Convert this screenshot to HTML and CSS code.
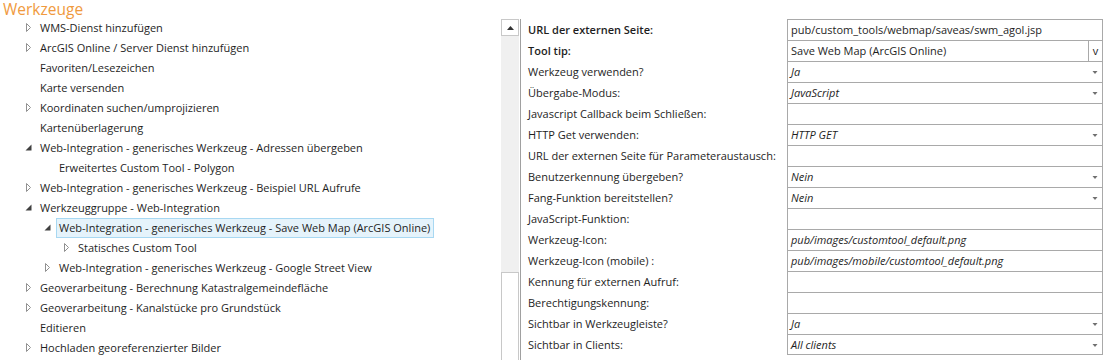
FILE: index.html
```html
<!DOCTYPE html>
<html lang="de">
<head>
    <meta charset="UTF-8">
    <title>Werkzeuge</title>
    <link rel="stylesheet" href="styles.css">
</head>
<body>
<div class="page">
    <!-- linke Seite: Baum der Werkzeuge -->
    <div class="tools-pane">
        <div class="title">Werkzeuge</div>
        <ul class="tree">
            <li class="node lvl0 closed"><span class="tog"></span><span class="lbl">WMS-Dienst hinzufügen</span></li>
            <li class="node lvl0 closed"><span class="tog"></span><span class="lbl">ArcGIS Online / Server Dienst hinzufügen</span></li>
            <li class="node lvl0"><span class="tog"></span><span class="lbl">Favoriten/Lesezeichen</span></li>
            <li class="node lvl0"><span class="tog"></span><span class="lbl">Karte versenden</span></li>
            <li class="node lvl0 closed"><span class="tog"></span><span class="lbl">Koordinaten suchen/umprojizieren</span></li>
            <li class="node lvl0"><span class="tog"></span><span class="lbl">Kartenüberlagerung</span></li>
            <li class="node lvl0 open"><span class="tog"></span><span class="lbl">Web-Integration - generisches Werkzeug - Adressen übergeben</span></li>
            <li class="node lvl1"><span class="tog"></span><span class="lbl">Erweitertes Custom Tool - Polygon</span></li>
            <li class="node lvl0 closed"><span class="tog"></span><span class="lbl">Web-Integration - generisches Werkzeug - Beispiel URL Aufrufe</span></li>
            <li class="node lvl0 open"><span class="tog"></span><span class="lbl">Werkzeuggruppe - Web-Integration</span></li>
            <li class="node lvl1 open selected"><span class="tog"></span><span class="lbl">Web-Integration - generisches Werkzeug - Save Web Map (ArcGIS Online)</span></li>
            <li class="node lvl2 closed"><span class="tog"></span><span class="lbl">Statisches Custom Tool</span></li>
            <li class="node lvl1 closed"><span class="tog"></span><span class="lbl">Web-Integration - generisches Werkzeug - Google Street View</span></li>
            <li class="node lvl0 closed"><span class="tog"></span><span class="lbl">Geoverarbeitung - Berechnung Katastralgemeindefläche</span></li>
            <li class="node lvl0 closed"><span class="tog"></span><span class="lbl">Geoverarbeitung - Kanalstücke pro Grundstück</span></li>
            <li class="node lvl0"><span class="tog"></span><span class="lbl">Editieren</span></li>
            <li class="node lvl0 closed"><span class="tog"></span><span class="lbl">Hochladen georeferenzierter Bilder</span></li>
        </ul>
    </div>

    <!-- rechte Seite: Eigenschaften -->
    <div class="props-pane">
        <div class="vscroll">
            <div class="scroll-up"><svg width="7" height="4" viewBox="0 0 7 4"><path d="M0 4 L3.5 0 L7 4 Z" fill="#333"/></svg></div>
            <div class="scroll-track"></div>
            <div class="scroll-thumb"></div>
        </div>
        <div class="grid">
            <div class="key bold">URL der externen Seite:</div>
            <div class="val">pub/custom_tools/webmap/saveas/swm_agol.jsp</div>

            <div class="key bold">Tool tip:</div>
            <div class="val has-btn"><span class="txt">Save Web Map (ArcGIS Online)</span><span class="btn-v">v</span></div>

            <div class="key">Werkzeug verwenden?</div>
            <div class="val sel"><span class="txt">Ja</span><span class="drop"></span></div>

            <div class="key">Übergabe-Modus:</div>
            <div class="val sel"><span class="txt">JavaScript</span><span class="drop"></span></div>

            <div class="key">Javascript Callback beim Schließen:</div>
            <div class="val"></div>

            <div class="key">HTTP Get verwenden:</div>
            <div class="val sel"><span class="txt">HTTP GET</span><span class="drop"></span></div>

            <div class="key">URL der externen Seite für Parameteraustausch:</div>
            <div class="val"></div>

            <div class="key">Benutzerkennung übergeben?</div>
            <div class="val sel"><span class="txt">Nein</span><span class="drop"></span></div>

            <div class="key">Fang-Funktion bereitstellen?</div>
            <div class="val sel"><span class="txt">Nein</span><span class="drop"></span></div>

            <div class="key">JavaScript-Funktion:</div>
            <div class="val"></div>

            <div class="key">Werkzeug-Icon:</div>
            <div class="val it">pub/images/customtool_default.png</div>

            <div class="key">Werkzeug-Icon (mobile) :</div>
            <div class="val it">pub/images/mobile/customtool_default.png</div>

            <div class="key">Kennung für externen Aufruf:</div>
            <div class="val"></div>

            <div class="key">Berechtigungskennung:</div>
            <div class="val"></div>

            <div class="key">Sichtbar in Werkzeugleiste?</div>
            <div class="val sel"><span class="txt">Ja</span><span class="drop"></span></div>

            <div class="key">Sichtbar in Clients:</div>
            <div class="val sel last"><span class="txt">All clients</span><span class="drop"></span></div>
        </div>
    </div>
</div>
</body>
</html>
```

FILE: styles.css
```css
body {
    margin: 0;
    padding: 0;
    background: #fff;
    font-family: "Open Sans", "Noto Sans", sans-serif;
    font-size: 11px;
    color: #1e1e1e;
    width: 1105px;
    height: 360px;
    overflow: hidden;
}

.page {
    display: flex;
    align-items: flex-start;
}

/* linker Bereich */
.tools-pane {
    width: 501px;
    flex-shrink: 0;
}

.title {
    height: 18px;
    line-height: 18px;
    padding-left: 3px;
    font-size: 15.5px;
    color: #f09a3e;
}

.tree {
    list-style: none;
    margin: 0;
    padding: 0;
}

.node {
    display: flex;
    align-items: center;
    height: 20px;
    white-space: nowrap;
}

.lvl0 { padding-left: 21px; }
.lvl1 { padding-left: 40px; }
.lvl2 { padding-left: 59px; }

.tog {
    width: 19px;
    height: 20px;
    flex-shrink: 0;
    background-repeat: no-repeat;
}

/* Pfeil zugeklappt */
.closed .tog {
    background-image: url("data:image/svg+xml;utf8,<svg xmlns='http://www.w3.org/2000/svg' width='19' height='20'><path d='M5.5 5.5 L9.5 9.5 L5.5 13.5 Z' fill='none' stroke='%23909090'/></svg>");
}

/* Pfeil aufgeklappt */
.open .tog {
    background-image: url("data:image/svg+xml;utf8,<svg xmlns='http://www.w3.org/2000/svg' width='19' height='20'><path d='M10.5 6.5 L10.5 12.5 L4.5 12.5 Z' fill='%23404040'/></svg>");
}

.lbl {
    line-height: 18px;
    border: 1px solid transparent;
    padding: 0 3px 0 2px;
    margin-left: -3px;
}

.selected .lbl {
    background: #e5f3fb;
    border-color: #a8d8f2;
}

/* rechter Bereich */
.props-pane {
    display: flex;
    margin-top: 19px;
}

.vscroll {
    width: 18px;
    height: 341px;
    display: flex;
    flex-direction: column;
    margin-right: 1px;
}

.scroll-up {
    height: 15px;
    border: 1px solid #c8c8c8;
    background: #fff;
    display: flex;
    align-items: center;
    justify-content: center;
}

.scroll-track {
    height: 236px;
    background: #f0f0f0;
}

.scroll-thumb {
    flex: 1;
    border: 1px solid #c8c8c8;
    border-bottom: none;
    background: #fff;
}

.grid {
    display: grid;
    grid-template-columns: 266px 316px;
    grid-auto-rows: 21px;
    border-left: 1px solid #a0a0a0;
    height: 341px;
}

.key {
    padding-left: 7px;
    line-height: 21px;
    white-space: nowrap;
}

.bold {
    font-weight: 600;
}

.val {
    border: 1px solid #a9a9a9;
    border-bottom: none;
    padding-left: 3px;
    line-height: 20px;
    display: flex;
    white-space: nowrap;
}

.val.last {
    border-bottom: 1px solid #a9a9a9;
}

.val .txt {
    flex: 1;
}

.sel,
.it {
    font-style: italic;
}

.btn-v {
    width: 13px;
    border-left: 1px solid #a9a9a9;
    text-align: center;
    font-style: normal;
}

.drop {
    width: 14px;
    background: url("data:image/svg+xml;utf8,<svg xmlns='http://www.w3.org/2000/svg' width='14' height='20'><path d='M4.5 9 L9.5 9 L7 12 Z' fill='%23707070'/></svg>") no-repeat;
}
```
